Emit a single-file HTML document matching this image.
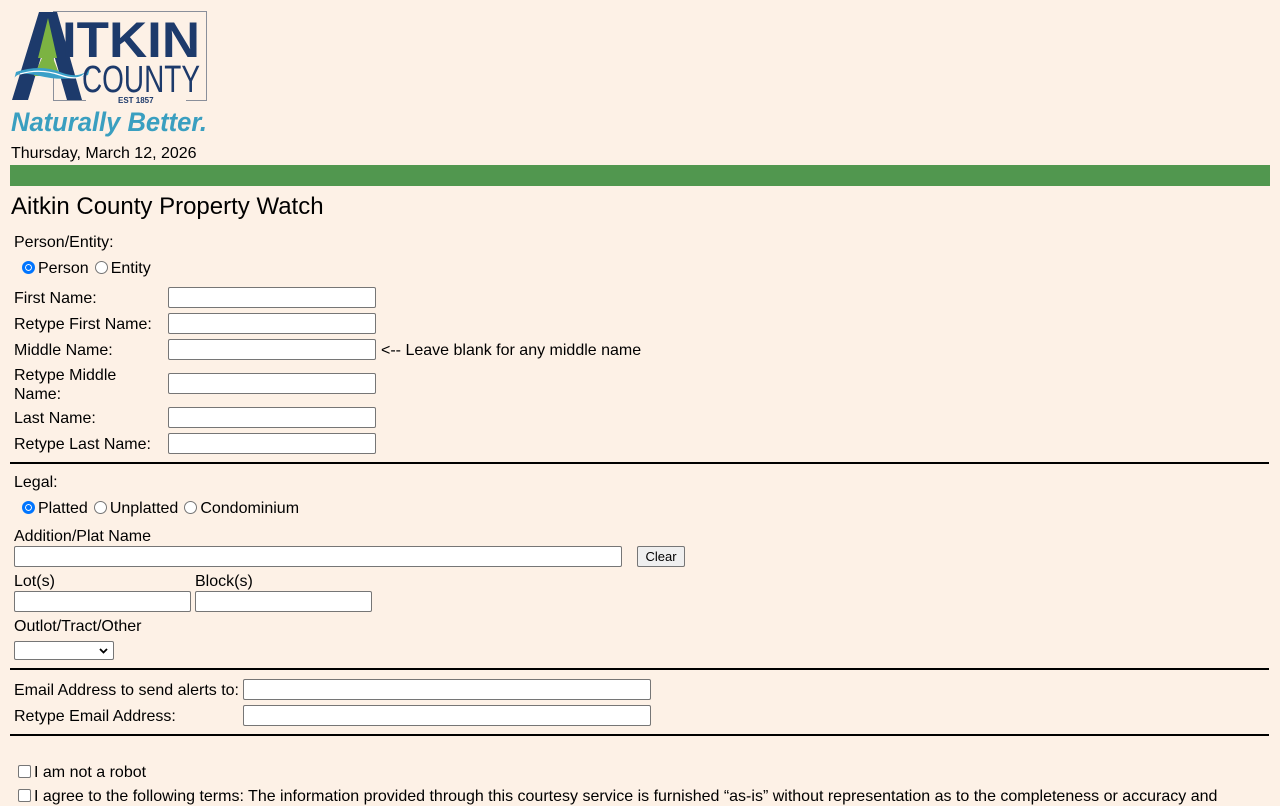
<!DOCTYPE html>
<html><head><meta charset="utf-8"><style>
body{margin:0;background:#fdf1e6;font-family:"Liberation Sans",sans-serif;font-size:16px;color:#000;width:1280px;height:800px;overflow:hidden;position:relative}
.a{position:absolute;white-space:nowrap}
.t{margin-top:1px}
.in{position:absolute;height:19px;border:1px solid #767676;background:#fff;border-radius:2px;box-sizing:border-box}
.hr{position:absolute;left:10px;width:1259px;height:2px;background:#000}
.rad{display:inline-block;width:13px;height:13px;border:1px solid #767676;border-radius:50%;background:#fff;vertical-align:-1px;margin:0 3px 0 0;box-sizing:border-box}
.rad.sp{margin-left:6px}
.rad.on{border:3px solid #0075ff;box-shadow:inset 0 0 0 1px #fff;background:#0075ff}
.cb{display:inline-block;width:13px;height:13px;border:1px solid #767676;border-radius:2px;background:#fff;box-sizing:border-box;vertical-align:-1px;margin-right:3px}
</style></head><body>
<svg class="a" style="left:10px;top:10px" width="200" height="128" viewBox="0 0 200 128">
<rect x="43.5" y="1.5" width="153" height="89" fill="none" stroke="#8a8f9a" stroke-width="1"/>
<polygon points="2,90 29,2 47,2 72,90 57,90 38,24 18,90" fill="#1d3a6b"/>
<polygon points="38,8 28,48 32,48 24,66 50,66 43,48 47,48" fill="#7cb342"/>
<path d="M6,62 Q30,54 50,62 T80,58 L78,65 Q55,72 30,66 T4,70 Z" fill="#3aa0c8"/>
<path d="M10,64 Q30,58 50,65 T76,62" stroke="#fff" stroke-width="1.2" fill="none"/>
<text x="52" y="47" font-family="Liberation Sans" font-weight="bold" font-size="50" fill="#1d3a6b" textLength="138" lengthAdjust="spacingAndGlyphs">ITKIN</text>
<text x="72" y="82" font-family="Liberation Sans" font-size="38" fill="#1d3a6b" textLength="118" lengthAdjust="spacingAndGlyphs">COUNTY</text>
<rect x="76" y="87" width="100" height="6" fill="#fdf1e6"/>
<text x="108" y="93" font-family="Liberation Sans" font-weight="bold" font-size="8" fill="#1d3a6b">EST 1857</text>
<text x="1" y="121" font-family="Liberation Sans" font-weight="bold" font-style="italic" font-size="27" fill="#3a9fc0" textLength="196" lengthAdjust="spacingAndGlyphs">Naturally Better.</text>
</svg>
<div class="a t" style="left:11px;top:144px">Thursday, March 12, 2026</div>
<div class="a" style="left:10px;top:165px;width:1260px;height:21px;background:#51974f"></div>
<div class="a t" style="left:11px;top:192px;font-size:24px">Aitkin County Property Watch</div>
<div class="a t" style="left:14px;top:233px">Person/Entity:</div>
<div class="a t" style="left:22px;top:259px"><span class="rad on"></span>Person<span class="rad sp"></span>Entity</div>
<div class="a t" style="left:14px;top:289px">First Name:</div><div class="in" style="left:168px;top:287px;width:208px;height:21px"></div>
<div class="a t" style="left:14px;top:315px">Retype First Name:</div><div class="in" style="left:168px;top:313px;width:208px;height:21px"></div>
<div class="a t" style="left:14px;top:341px">Middle Name:</div><div class="in" style="left:168px;top:339px;width:208px;height:21px"></div>
<div class="a t" style="left:381px;top:341px">&lt;-- Leave blank for any middle name</div>
<div class="a t" style="left:14px;top:365px;line-height:19px">Retype Middle<br>Name:</div><div class="in" style="left:168px;top:373px;width:208px;height:21px"></div>
<div class="a t" style="left:14px;top:409px">Last Name:</div><div class="in" style="left:168px;top:407px;width:208px;height:21px"></div>
<div class="a t" style="left:14px;top:435px">Retype Last Name:</div><div class="in" style="left:168px;top:433px;width:208px;height:21px"></div>
<div class="hr" style="top:462px"></div>
<div class="a t" style="left:14px;top:473px">Legal:</div>
<div class="a t" style="left:22px;top:499px"><span class="rad on"></span>Platted<span class="rad sp"></span>Unplatted<span class="rad sp"></span>Condominium</div>
<div class="a t" style="left:14px;top:527px">Addition/Plat Name</div>
<div class="in" style="left:14px;top:546px;width:608px;height:21px"></div>
<div class="a" style="left:637px;top:546px;width:48px;height:21px;border:1px solid #767676;background:#efefef;border-radius:2px;box-sizing:border-box;font-size:13px;text-align:center;line-height:19px">Clear</div>
<div class="a t" style="left:14px;top:572px">Lot(s)</div><div class="a t" style="left:195px;top:572px">Block(s)</div>
<div class="in" style="left:14px;top:591px;width:177px;height:21px"></div>
<div class="in" style="left:195px;top:591px;width:177px;height:21px"></div>
<div class="a t" style="left:14px;top:617px">Outlot/Tract/Other</div>
<div class="in" style="left:14px;top:641px;width:100px;height:19px"><svg style="position:absolute;right:5px;top:6px" width="9" height="6"><path d="M1,1 L4.5,4.5 L8,1" stroke="#000" stroke-width="1.8" fill="none"/></svg></div>
<div class="hr" style="top:668px"></div>
<div class="a t" style="left:14px;top:681px">Email Address to send alerts to:</div><div class="in" style="left:243px;top:679px;width:408px;height:21px"></div>
<div class="a t" style="left:14px;top:707px">Retype Email Address:</div><div class="in" style="left:243px;top:705px;width:408px;height:21px"></div>
<div class="hr" style="top:734px"></div>
<div class="a t" style="left:18px;top:763px"><span class="cb"></span>I am not a robot</div>
<div class="a t" style="left:18px;top:787px"><span class="cb"></span>I agree to the following terms: The information provided through this courtesy service is furnished “as-is” without representation as to the completeness or accuracy and</div>
</body></html>
